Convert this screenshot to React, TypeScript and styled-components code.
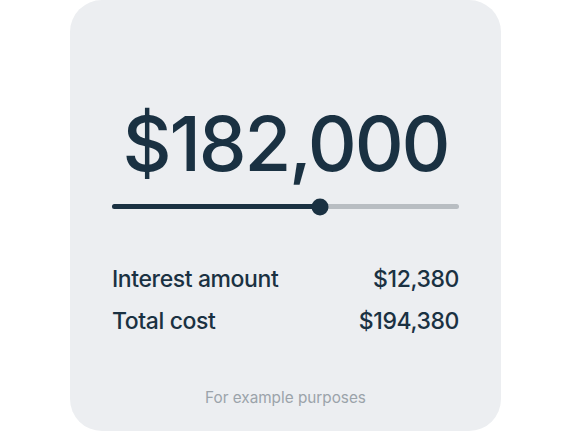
import React from "react";
import styled, { createGlobalStyle } from "styled-components";

const Global = createGlobalStyle`
  html, body { margin: 0; padding: 0; background: #ffffff; }
  body { font-family: Inter, "Liberation Sans", sans-serif; }
`;

const Page = styled.div`
  width: 575px;
  height: 431px;
  display: flex;
  padding-left: 70px;
  box-sizing: border-box;
`;

const Card = styled.div`
  width: 431px;
  height: 431px;
  box-sizing: border-box;
  background: #eceef1;
  border-radius: 32px;
  padding: 100px 42px 0 42px;
  display: flex;
  flex-direction: column;
  color: #1a3142;
`;

const Amount = styled.div`
  font-size: 76px;
  line-height: 86px;
  font-weight: 500;
  text-align: center;
  letter-spacing: -2.2px;
`;

const Track = styled.div`
  position: relative;
  margin-top: 18px;
  height: 5px;
  border-radius: 3px;
  background: #b8bdc2;
`;

const Fill = styled.div`
  height: 100%;
  border-radius: 3px;
  background: #1a3142;
`;

const Thumb = styled.div`
  position: absolute;
  top: 50%;
  width: 17px;
  height: 17px;
  border-radius: 50%;
  background: #1a3142;
  transform: translate(-50%, -50%);
`;

const Rows = styled.div`
  margin-top: 56px;
  display: flex;
  flex-direction: column;
  gap: 13px;
`;

const Row = styled.div`
  display: flex;
  justify-content: space-between;
  font-size: 23px;
  line-height: 29px;
  font-weight: 500;
  letter-spacing: -0.4px;
`;

const Footer = styled.div`
  margin-top: auto;
  margin-bottom: 24px;
  text-align: center;
  font-size: 15.3px;
  color: #9ba3aa;
`;

export default function App() {
  const pct = 60;
  return (
    <>
      <Global />
      <Page>
        <Card>
          <Amount>$182,000</Amount>
          <Track>
            <Fill style={{ width: `${pct}%` }} />
            <Thumb style={{ left: `${pct}%` }} />
          </Track>
          <Rows>
            <Row>
              <span>Interest amount</span>
              <span>$12,380</span>
            </Row>
            <Row>
              <span>Total cost</span>
              <span>$194,380</span>
            </Row>
          </Rows>
          <Footer>For example purposes</Footer>
        </Card>
      </Page>
    </>
  );
}
